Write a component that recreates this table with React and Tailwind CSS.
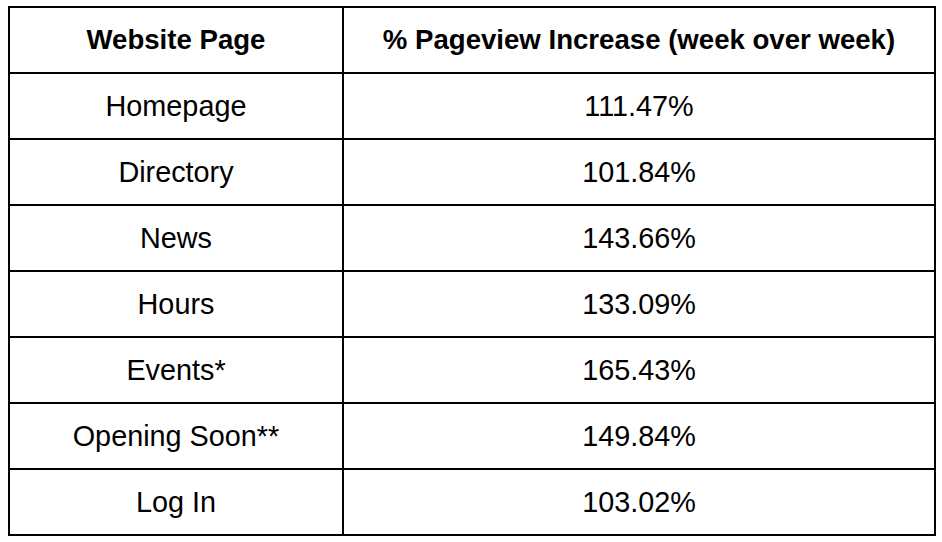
import React from "react";

const rows = [
  ["Homepage", "111.47%"],
  ["Directory", "101.84%"],
  ["News", "143.66%"],
  ["Hours", "133.09%"],
  ["Events*", "165.43%"],
  ["Opening Soon**", "149.84%"],
  ["Log In", "103.02%"],
];

const Cell = ({ wide, bold, children }) => (
  <div
    className={`${wide ? "w-[592px]" : "w-[334px]"} h-[66px] flex items-center justify-center border-r-2 border-b-2 border-black ${
      bold ? "font-bold text-[27.6px]" : "text-[28.8px]"
    }`}
  >
    {children}
  </div>
);

export default function App() {
  return (
    <div
      className="w-[942px] h-[542px] bg-white pt-[6px] pl-[8px] text-black leading-none"
      style={{ fontFamily: '"Liberation Sans", Arial, sans-serif' }}
    >
      <div className="w-[928px] border-t-2 border-l-2 border-black flex flex-col">
        <div className="flex">
          <Cell bold>Website Page</Cell>
          <Cell wide bold>% Pageview Increase (week over week)</Cell>
        </div>
        {rows.map(([page, pct]) => (
          <div className="flex" key={page}>
            <Cell>{page}</Cell>
            <Cell wide>{pct}</Cell>
          </div>
        ))}
      </div>
    </div>
  );
}
